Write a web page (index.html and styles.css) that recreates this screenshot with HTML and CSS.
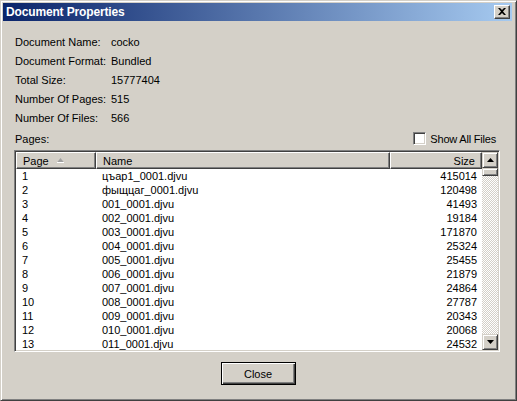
FILE: index.html
```html
<!DOCTYPE html>
<html>
<head>
<meta charset="utf-8">
<link rel="stylesheet" href="styles.css">
</head>
<body>
<div class="window">
  <div class="titlebar">
    <span class="title">Document Properties</span>
    <div class="tb-close">
      <svg width="8" height="7" viewBox="0 0 8 7"><path d="M0 0h2l2 2 2-2h2L5 3.5 8 7H6L4 5 2 7H0l3-3.5z" fill="#000"/></svg>
    </div>
  </div>
  <div class="content">
    <div class="info">
      <div class="row"><span class="label">Document Name:</span><span>cocko</span></div>
      <div class="row"><span class="label">Document Format:</span><span>Bundled</span></div>
      <div class="row"><span class="label">Total Size:</span><span>15777404</span></div>
      <div class="row"><span class="label">Number Of Pages:</span><span>515</span></div>
      <div class="row"><span class="label">Number Of Files:</span><span>566</span></div>
    </div>
    <div class="pages-row">
      <span>Pages:</span>
      <div class="check"><span class="box"></span><span>Show All Files</span></div>
    </div>
    <div class="list">
      <div class="list-main">
        <div class="header">
          <div class="hcell">Page<svg class="sort" width="7" height="5" viewBox="0 0 7 5"><path d="M3.5 0L7 4.5H0z" fill="#a0a0a0"/><path d="M0 4.5H7" stroke="#fff" stroke-width="1"/></svg></div>
          <div class="hcell">Name</div>
          <div class="hcell right">Size</div>
        </div>
        <div class="rows">
          <div class="r"><span>1</span><span>цъар1_0001.djvu</span><span class="num">415014</span></div>
          <div class="r"><span>2</span><span>фыщцаг_0001.djvu</span><span class="num">120498</span></div>
          <div class="r"><span>3</span><span>001_0001.djvu</span><span class="num">41493</span></div>
          <div class="r"><span>4</span><span>002_0001.djvu</span><span class="num">19184</span></div>
          <div class="r"><span>5</span><span>003_0001.djvu</span><span class="num">171870</span></div>
          <div class="r"><span>6</span><span>004_0001.djvu</span><span class="num">25324</span></div>
          <div class="r"><span>7</span><span>005_0001.djvu</span><span class="num">25455</span></div>
          <div class="r"><span>8</span><span>006_0001.djvu</span><span class="num">21879</span></div>
          <div class="r"><span>9</span><span>007_0001.djvu</span><span class="num">24864</span></div>
          <div class="r"><span>10</span><span>008_0001.djvu</span><span class="num">27787</span></div>
          <div class="r"><span>11</span><span>009_0001.djvu</span><span class="num">20343</span></div>
          <div class="r"><span>12</span><span>010_0001.djvu</span><span class="num">20068</span></div>
          <div class="r"><span>13</span><span>011_0001.djvu</span><span class="num">24532</span></div>
        </div>
      </div>
      <div class="scrollbar">
        <div class="sb-btn"><svg width="7" height="4" viewBox="0 0 7 4"><path d="M3.5 0L7 4H0z" fill="#000"/></svg></div>
        <div class="sb-track"><div class="sb-thumb"></div></div>
        <div class="sb-btn"><svg width="7" height="4" viewBox="0 0 7 4"><path d="M0 0H7L3.5 4z" fill="#000"/></svg></div>
      </div>
    </div>
    <div class="footer">
      <div class="btn"><span>Close</span></div>
    </div>
  </div>
</div>
</body>
</html>
```

FILE: styles.css
```css
html, body {
  margin: 0;
  padding: 0;
  background: #d4d0c8;
}
body {
  width: 517px;
  height: 401px;
  overflow: hidden;
  font-family: "Liberation Sans", Arial, sans-serif;
  font-size: 11px;
  color: #000;
}
.window {
  width: 517px;
  height: 401px;
  box-sizing: border-box;
  background: #d4d0c8;
  border: 1px solid;
  border-color: #d4d0c8 #404040 #404040 #d4d0c8;
  box-shadow: inset 1px 1px #fff, inset -1px -1px #808080;
  padding: 2px 4px 2px 2px;
  display: flex;
  flex-direction: column;
}
.titlebar {
  height: 18px;
  flex: none;
  background: linear-gradient(to right, #0a246a, #a6caf0);
  display: flex;
  align-items: center;
  justify-content: space-between;
  padding: 0 2px 0 3px;
}
.title {
  color: #fff;
  font-weight: bold;
  font-size: 12px;
  letter-spacing: -0.15px;
}
.tb-close {
  width: 16px;
  height: 14px;
  box-sizing: border-box;
  background: #d4d0c8;
  border: 1px solid;
  border-color: #fff #404040 #404040 #fff;
  box-shadow: inset -1px -1px #808080;
  display: flex;
  align-items: center;
  justify-content: center;
  padding: 0 1px 1px 0;
}
.tb-close svg { display: block; }
.content {
  flex: 1;
  padding: 11px 0 0 11px;
  display: flex;
  flex-direction: column;
}
.info .row {
  height: 19px;
  display: flex;
  align-items: center;
  padding-left: 1px;
}
.label {
  width: 96px;
  flex: none;
}
.pages-row {
  width: 486px;
  height: 23px;
  display: flex;
  align-items: center;
  justify-content: space-between;
  padding-left: 1px;
  box-sizing: border-box;
  padding-right: 4px;
}
.check {
  display: flex;
  align-items: center;
  gap: 4px;
  letter-spacing: -0.2px;
}
.box {
  width: 13px;
  height: 13px;
  box-sizing: border-box;
  background: #fff;
  border: 1px solid;
  border-color: #808080 #fff #fff #808080;
  box-shadow: inset 1px 1px #404040, inset -1px -1px #d4d0c8;
}
.list {
  width: 486px;
  height: 202px;
  box-sizing: border-box;
  border: 1px solid;
  border-color: #808080 #fff #fff #808080;
  box-shadow: inset 1px 1px #404040, inset -1px -1px #d4d0c8;
  padding: 1px;
  background: #fff;
  display: flex;
  flex: none;
}
.list-main {
  width: 466px;
  overflow: hidden;
  display: flex;
  flex-direction: column;
}
.header {
  display: grid;
  grid-template-columns: 80px 294px 92px;
  height: 17px;
  flex: none;
}
.hcell {
  background: #d4d0c8;
  box-sizing: border-box;
  border: 1px solid;
  border-color: #fff #404040 #404040 #fff;
  box-shadow: inset -1px -1px #808080;
  display: flex;
  align-items: center;
  padding-left: 6px;
  gap: 8px;
}
.hcell.right {
  justify-content: flex-end;
  padding-right: 6px;
}
.sort { display: block; margin-top: -1px; }
.rows .r {
  display: grid;
  grid-template-columns: 80px 294px 92px;
  height: 14px;
  align-items: center;
}
.r span { padding-left: 6px; line-height: 14px; }
.r span.num {
  text-align: right;
  padding-left: 0;
  padding-right: 5px;
}
.scrollbar {
  width: 16px;
  display: flex;
  flex-direction: column;
}
.sb-btn {
  width: 16px;
  height: 16px;
  flex: none;
  box-sizing: border-box;
  background: #d4d0c8;
  border: 1px solid;
  border-color: #d4d0c8 #404040 #404040 #d4d0c8;
  box-shadow: inset 1px 1px #fff, inset -1px -1px #808080;
  display: flex;
  align-items: center;
  justify-content: center;
}
.sb-btn svg { display: block; }
.sb-track {
  flex: 1;
  background: repeating-conic-gradient(#d4d0c8 0 25%, #fff 0 50%) 0 0 / 2px 2px;
}
.sb-thumb {
  height: 8px;
  box-sizing: border-box;
  background: #d4d0c8;
  border: 1px solid;
  border-color: #d4d0c8 #404040 #404040 #d4d0c8;
  box-shadow: inset 1px 1px #fff, inset -1px -1px #808080;
}
.footer {
  display: flex;
  justify-content: center;
  padding-top: 10px;
  width: 486px;
  padding-left: 1px;
}
.btn {
  width: 75px;
  height: 23px;
  box-sizing: border-box;
  border: 1px solid #000;
  background: #d4d0c8;
  box-shadow: inset 1px 1px #fff, inset -1px -1px #404040, inset -2px -2px #808080;
  display: flex;
  align-items: center;
  justify-content: center;
}
```
